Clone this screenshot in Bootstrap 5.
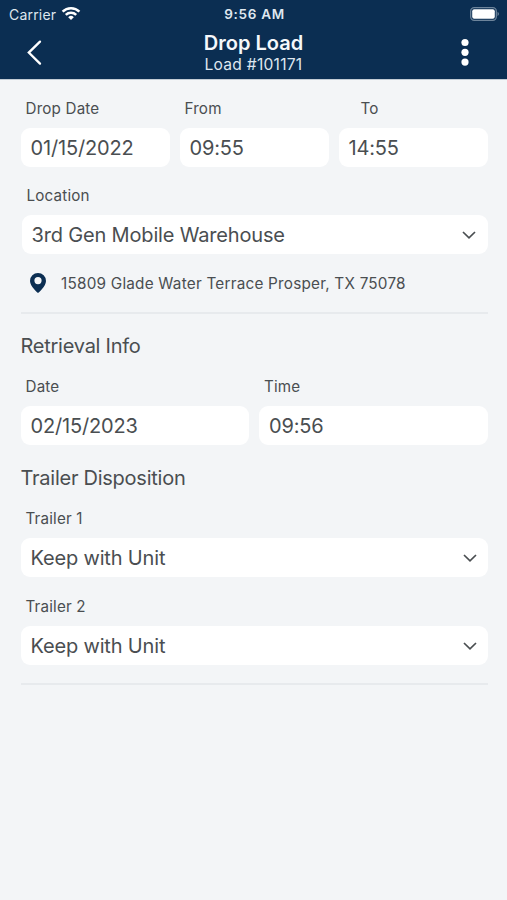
<!DOCTYPE html>
<html lang="en">
<head>
<meta charset="utf-8">
<meta name="viewport" content="width=device-width, initial-scale=1">
<title>Drop Load</title>
<link href="https://cdn.jsdelivr.net/npm/bootstrap@5.3.0/dist/css/bootstrap.min.css" rel="stylesheet">
<style>
body{background:#f3f5f7;color:#4a4e51;font-family:Inter,"Liberation Sans",sans-serif;min-height:900px;overflow-x:hidden}
.topbar{background:#0b2e52;height:79px;box-shadow:0 1px 0 #c3ccd5}
.status{height:27px;font-size:13.5px;line-height:27px;padding:0 7px 0 9px;color:#dfe7ef}
.carrier{font-size:14px;letter-spacing:.2px;padding-top:1px}
.wifi{margin-left:5px}
.side{width:90px}
.clock{font-weight:600;font-size:13.5px;letter-spacing:.7px;padding-top:1px}
.titlebar{height:52px;padding:0 36px 0 26px}
.headline{padding:1px 0 0 5px}
.title{font-size:20px;font-weight:600;line-height:22px;letter-spacing:0;color:#f5f8fb}
.subtitle{font-size:15.6px;line-height:21px;letter-spacing:.25px;color:#dfe7ef}
.page{padding:17px 19.500px 0 20.500px}
.pair{gap:10px}
.caption{font-size:15.2px;line-height:26px;height:32px;padding-left:5px;letter-spacing:.18px;white-space:nowrap}
.caption-to{padding-left:22px}
.field{font-size:20px;line-height:41px;height:39px;padding:0 10px;border-radius:9px;background:#fff;white-space:nowrap;letter-spacing:-.17px}
.picker span{padding-top:2px}
.location{margin-left:1px}
.location .picker{padding-right:11px}
.heading{font-size:20px;line-height:26px;height:26px;margin:0;font-weight:400;letter-spacing:-.25px}
.rule{height:2px;background:#e7eaed}
.address{font-size:15.3px;line-height:24px;letter-spacing:.22px;margin:17px 0 17px 9.500px;gap:15px}
.address span{position:relative;top:1px}
svg{display:block;flex:none}
</style>
<script src="https://cdn.jsdelivr.net/npm/bootstrap@5.3.0/dist/js/bootstrap.bundle.min.js"></script>
</head>
<body>
<header class="topbar">
  <div class="status d-flex justify-content-between align-items-center">
    <div class="side d-flex align-items-center"><span class="carrier">Carrier</span>
      <svg class="wifi" width="20" height="15" viewBox="0 0 20 15" fill="none" stroke="#fff" stroke-width="2.500"><path d="M1.600 5.600A12 12 0 0 1 18.400 5.600M4.800 8.800A7.400 7.400 0 0 1 15.200 8.800"/><path d="M7.200 11.200A4 4 0 0 1 12.800 11.200L10 14Z" fill="#fff" stroke="none"/></svg>
    </div>
    <span class="clock">9:56 AM</span>
    <div class="side d-flex justify-content-end">
      <svg width="30" height="14" viewBox="0 0 30 14"><rect x=".7" y=".7" width="25.600" height="12.600" rx="3.500" fill="none" stroke="#6d849b" stroke-width="1.300"/><rect x="2.200" y="2.200" width="22.600" height="9.600" rx="2" fill="#fff"/><path d="M27.600 4.800q2.400 2.200 0 4.400Z" fill="#8497aa"/></svg>
    </div>
  </div>
  <nav class="titlebar d-flex justify-content-between align-items-center">
    <svg width="17" height="28" viewBox="0 0 17 28" fill="none" stroke="#fff" stroke-width="2.300" stroke-linecap="round"><path d="M14 2.600 2.800 13.600 14 24.600"/></svg>
    <div class="headline text-center">
      <div class="title">Drop Load</div>
      <div class="subtitle">Load #101171</div>
    </div>
    <svg width="12" height="30" viewBox="0 0 12 30" fill="#fff"><circle cx="6" cy="4.500" r="3.600"/><circle cx="6" cy="14.300" r="3.600"/><circle cx="6" cy="24.100" r="3.600"/></svg>
  </nav>
</header>
<main class="page">
  <div class="pair d-flex">
    <div class="w-100"><div class="caption">Drop Date</div><div class="field">01/15/2022</div></div>
    <div class="w-100"><div class="caption">From</div><div class="field">09:55</div></div>
    <div class="w-100"><div class="caption caption-to">To</div><div class="field">14:55</div></div>
  </div>
  <div class="location">
    <div class="caption mt-3">Location</div>
    <div class="field picker d-flex justify-content-between align-items-center"><span>3rd Gen Mobile Warehouse</span>
      <svg width="16" height="10" viewBox="0 0 16 10" fill="none" stroke="#4a4e51" stroke-width="1.700"><path d="M2 2 8 7.800 14 2"/></svg></div>
  </div>
  <div class="address d-flex align-items-center"><svg width="16" height="20" viewBox="0 0 16 20"><path fill="#0b2e52" fill-rule="evenodd" d="M8 0a8 8 0 0 0-8 8c0 5.500 8 12 8 12s8-6.500 8-12a8 8 0 0 0-8-8Zm0 4a3.600 3.600 0 1 1 0 7.200A3.600 3.600 0 0 1 8 4Z"/></svg><span>15809 Glade Water Terrace Prosper, TX 75078</span></div>
  <div class="rule"></div>
  <h2 class="heading" style="margin-top:19px">Retrieval Info</h2>
  <div class="pair d-flex" style="margin-top:15px">
    <div class="w-100"><div class="caption">Date</div><div class="field">02/15/2023</div></div>
    <div class="w-100"><div class="caption">Time</div><div class="field">09:56</div></div>
  </div>
  <h2 class="heading" style="margin-top:20px">Trailer Disposition</h2>
  <div class="caption" style="margin-top:15px">Trailer 1</div>
  <div class="field picker d-flex justify-content-between align-items-center"><span>Keep with Unit</span>
    <svg width="16" height="10" viewBox="0 0 16 10" fill="none" stroke="#4a4e51" stroke-width="1.700"><path d="M2 2 8 7.800 14 2"/></svg></div>
  <div class="caption" style="margin-top:17px">Trailer 2</div>
  <div class="field picker d-flex justify-content-between align-items-center"><span>Keep with Unit</span>
    <svg width="16" height="10" viewBox="0 0 16 10" fill="none" stroke="#4a4e51" stroke-width="1.700"><path d="M2 2 8 7.800 14 2"/></svg></div>
  <div class="rule" style="margin-top:18px"></div>
</main>
</body>
</html>
